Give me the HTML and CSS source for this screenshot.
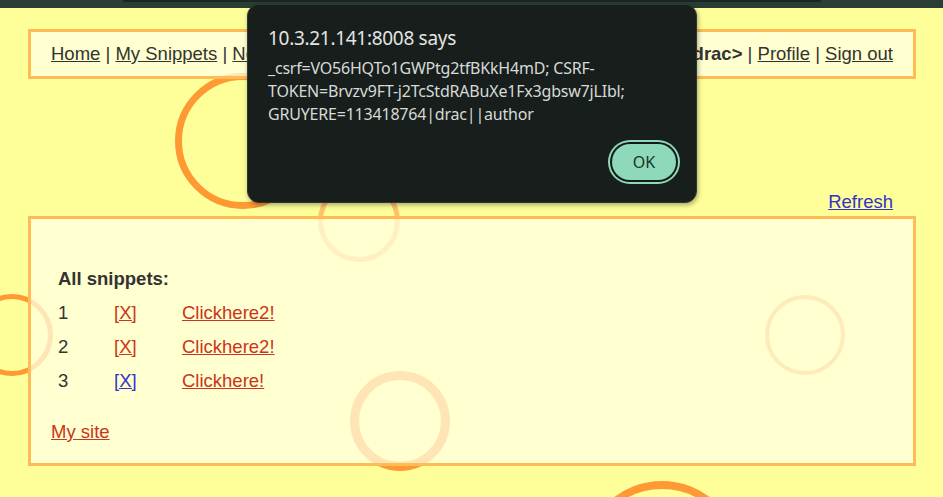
FILE: index.html
```html
<!DOCTYPE html>
<html>
<head>
<meta charset="utf-8">
<title>Gruyere: Home</title>
<link rel="stylesheet" href="styles.css">
</head>
<body>
<div class="chrome"><div class="chrome-tab"></div></div>
<div class="page">
  <svg class="bg-circles" width="943" height="497" viewBox="0 0 943 497" aria-hidden="true">
    <circle cx="243" cy="141" r="64.5" fill="none" stroke="#ff9933" stroke-width="7"/>
    <circle cx="359" cy="221" r="38.5" fill="none" stroke="#ffc266" stroke-width="5"/>
    <circle cx="12" cy="335" r="38.5" fill="none" stroke="#ff9933" stroke-width="5"/>
    <circle cx="400" cy="421" r="45.5" fill="none" stroke="#ff9933" stroke-width="9"/>
    <circle cx="805" cy="335" r="38" fill="none" stroke="#ffaa44" stroke-width="4"/>
    <circle cx="662" cy="560" r="75" fill="none" stroke="#ff9933" stroke-width="8"/>
  </svg>
  <div class="menu">
    <div class="menu-left"><a href="#">Home</a> | <a href="#">My Snippets</a> | <a href="#">New Snippet</a> | <a href="#">Upload</a></div>
    <div class="menu-right"><b>&lt;drac&gt;</b> | <a href="#">Profile</a> | <a href="#">Sign out</a></div>
  </div>
  <div class="refresh"><a href="#">Refresh</a></div>
  <div class="panel">
    <div class="title">All snippets:</div>
    <div class="rows">
      <div class="row"><span>1</span><a href="#" class="red">[X]</a><a href="#" class="red">Clickhere2!</a></div>
      <div class="row"><span>2</span><a href="#" class="red">[X]</a><a href="#" class="red">Clickhere2!</a></div>
      <div class="row"><span>3</span><a href="#" class="blue">[X]</a><a href="#" class="red">Clickhere!</a></div>
    </div>
    <a href="#" class="red mysite">My site</a>
  </div>
</div>
<div class="dialog">
  <div class="dialog-title">10.3.21.141:8008 says</div>
  <div class="dialog-body">_csrf=VO56HQTo1GWPtg2tfBKkH4mD; CSRF-TOKEN=Brvzv9FT-j2TcStdRABuXe1Fx3gbsw7jLIbl; GRUYERE=113418764|drac||author</div>
  <div class="dialog-actions"><button class="ok">OK</button></div>
</div>
</body>
</html>
```

FILE: styles.css
```css
html, body {
  margin: 0;
  padding: 0;
}
body {
  width: 943px;
  height: 497px;
  overflow: hidden;
  background: #ffff99;
  font-family: "Liberation Sans", Arial, sans-serif;
  font-size: 18.5px;
  color: #333;
  position: relative;
}
.chrome {
  height: 8px;
  background: #2b3d35;
  position: relative;
  z-index: 2;
}
.chrome-tab {
  margin-left: 123px;
  width: 698px;
  height: 2px;
  background: #1a2621;
  border-radius: 0 0 4px 4px;
}
.page {
  position: relative;
  padding: 21px 27px 0 28px;
}
.bg-circles {
  position: absolute;
  left: 0;
  top: -8px;
  z-index: 0;
}
.menu, .refresh, .panel {
  position: relative;
  z-index: 1;
}
.menu {
  display: flex;
  justify-content: space-between;
  border: 3px solid #ffbb55;
  background: rgba(255, 255, 226, 0.75);
  padding: 11px 20px 12px;
  line-height: 21px;
}
.menu a {
  color: #333;
}
.refresh {
  text-align: right;
  padding: 112px 23px 0 0;
  line-height: 21px;
  height: 25px;
}
.refresh a {
  color: #3333cc;
}
.panel {
  border: 3px solid #ffbb55;
  background: rgba(255, 255, 226, 0.75);
  padding: 43px 20px 14px;
  line-height: 34px;
}
.title {
  font-weight: bold;
  padding-left: 7px;
}
.row {
  display: grid;
  grid-template-columns: 56px 68px auto;
  padding-left: 7px;
}
.row a {
  justify-self: start;
}
.rows {
  margin-bottom: 17px;
}
a.red {
  color: #cc3322;
}
a.blue {
  color: #3333cc;
}
.mysite {
  display: inline-block;
}
.dialog {
  position: absolute;
  left: 247px;
  top: 4px;
  width: 450px;
  height: 199px;
  box-sizing: border-box;
  background: #181e1c;
  border: 1px solid #2f3733;
  border-radius: 12px;
  box-shadow: 1px 2px 5px rgba(0, 0, 0, 0.35);
  z-index: 3;
  padding: 20px 20px 22px;
  display: flex;
  flex-direction: column;
  font-family: "Noto Sans", "Open Sans", sans-serif;
  color: #d6dad8;
}
.dialog-title {
  font-size: 19px;
  line-height: 26px;
  color: #e2e5e3;
  letter-spacing: -0.3px;
}
.dialog-body {
  margin-top: 6px;
  font-size: 16px;
  line-height: 23px;
  letter-spacing: -0.2px;
  overflow-wrap: break-word;
}
.dialog-actions {
  margin-top: auto;
  display: flex;
  justify-content: flex-end;
}
.ok {
  width: 64px;
  height: 36px;
  border: none;
  border-radius: 18px;
  background: #8dd9b9;
  color: #17352a;
  font-family: "Noto Sans", "Open Sans", sans-serif;
  font-size: 16px;
  box-shadow: 0 0 0 2px #151a18, 0 0 0 4px #8dd9b9;
}
```
